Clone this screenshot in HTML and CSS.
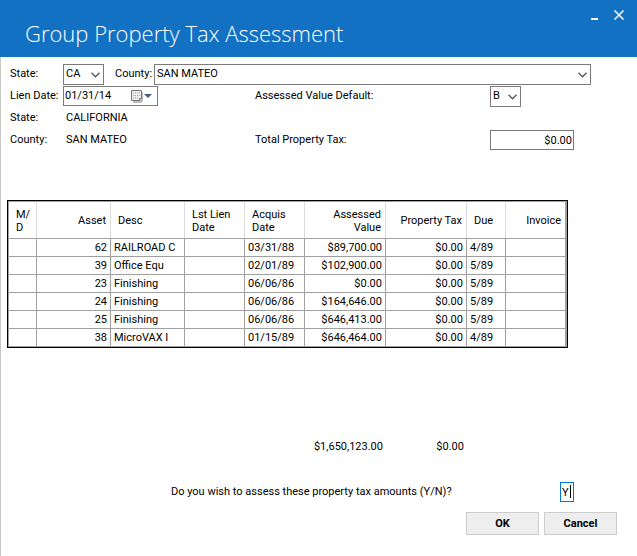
FILE: index.html
```html
<!DOCTYPE html>
<html lang="en">
<head>
<meta charset="utf-8">
<title>Group Property Tax Assessment</title>
<link rel="stylesheet" href="styles.css">
</head>
<body>
<header class="titlebar">
  <h1>Group Property Tax Assessment</h1>
  <div class="window-controls">
    <button type="button" aria-label="Minimize"><svg width="10" height="10" viewBox="0 0 10 10"><path d="M1 8h7v2H1z" fill="#fff"/></svg></button>
    <button type="button" aria-label="Close"><svg width="10" height="10" viewBox="0 0 10 10"><path d="M.5 .5l9 9M9.500 .5l-9 9" stroke="#fff" stroke-width="1.500" fill="none"/></svg></button>
  </div>
</header>
<main>
  <form>
    <div class="row">
      <label class="name" for="state">State:</label>
      <span class="select state"><select id="state"><option>CA</option></select><svg viewBox="0 0 9 6"><path d="M.5 .8l4 4 4-4"/></svg></span>
      <label class="county-name" for="county">County:</label>
      <span class="select county"><select id="county"><option>SAN MATEO</option></select><svg viewBox="0 0 9 6"><path d="M.5 .8l4 4 4-4"/></svg></span>
    </div>
    <div class="row">
      <label class="name" for="lien">Lien Date:</label>
      <span class="date"><input id="lien" type="text" value="01/31/14"><button type="button" aria-label="Choose date"><svg width="22" height="13" viewBox="0 0 22 13"><path d="M2 2h10v9l-2 2H2z" fill="#bbb"/><path d="M.5 .5h10v8l-2 2h-8z" fill="#eceef2" stroke="#777"/><path d="M2 3h7M2 5.500h7M2 8h6" stroke="#8ea0bd" stroke-dasharray="1 1"/><path d="M8.500 10.500v-2h2" fill="#fff" stroke="#777"/><path d="M13 4h8l-4 4z" fill="#3e5f7f"/></svg></button></span>
      <label class="mid" for="default">Assessed Value Default:</label>
      <span class="select default"><select id="default"><option>B</option></select><svg viewBox="0 0 9 6"><path d="M.5 .8l4 4 4-4"/></svg></span>
    </div>
    <div class="row"><span class="name">State:</span><span class="value">CALIFORNIA</span></div>
    <div class="row">
      <span class="name">County:</span><span class="value">SAN MATEO</span>
      <label class="mid" for="total">Total Property Tax:</label>
      <input class="total" id="total" type="text" value="$0.00">
    </div>
    <div class="grid">
      <table>
        <colgroup><col class="c-md"><col class="c-text"><col class="c-text"><col class="c-date"><col class="c-date"><col class="c-money"><col class="c-money"><col class="c-due"><col></colgroup>
        <thead><tr><th>M/<br>D</th><th class="num">Asset</th><th>Desc</th><th>Lst Lien<br>Date</th><th>Acquis<br>Date</th><th class="num">Assessed<br>Value</th><th class="num">Property Tax</th><th>Due</th><th class="num">Invoice</th></tr></thead>
        <tbody>
          <tr><td></td><td class="num">62</td><td>RAILROAD C</td><td></td><td>03/31/88</td><td class="num">$89,700.00</td><td class="num">$0.00</td><td>4/89</td><td></td></tr>
          <tr><td></td><td class="num">39</td><td>Office Equ</td><td></td><td>02/01/89</td><td class="num">$102,900.00</td><td class="num">$0.00</td><td>5/89</td><td></td></tr>
          <tr><td></td><td class="num">23</td><td>Finishing</td><td></td><td>06/06/86</td><td class="num">$0.00</td><td class="num">$0.00</td><td>5/89</td><td></td></tr>
          <tr><td></td><td class="num">24</td><td>Finishing</td><td></td><td>06/06/86</td><td class="num">$164,646.00</td><td class="num">$0.00</td><td>5/89</td><td></td></tr>
          <tr><td></td><td class="num">25</td><td>Finishing</td><td></td><td>06/06/86</td><td class="num">$646,413.00</td><td class="num">$0.00</td><td>5/89</td><td></td></tr>
          <tr><td></td><td class="num">38</td><td>MicroVAX I</td><td></td><td>01/15/89</td><td class="num">$646,464.00</td><td class="num">$0.00</td><td>4/89</td><td></td></tr>
        </tbody>
      </table>
    </div>
    <div class="sums"><output>$1,650,123.00</output><output>$0.00</output></div>
    <div class="confirm">
      <label for="answer">Do you wish to assess these property tax amounts (Y/N)?</label>
      <span class="answer"><input id="answer" type="text" value="Y"><i class="caret"></i></span>
    </div>
    <div class="actions"><button type="button">OK</button><button type="button">Cancel</button></div>
  </form>
</main>
</body>
</html>
```
FILE: styles.css
```css
* { box-sizing: border-box; }
body {
  margin: 0;
  min-height: 100vh;
  display: flex;
  flex-direction: column;
  background: #fff;
  color: #000;
  font: 11px/14px Roboto, "Liberation Sans", sans-serif;
}
input, select, button { font: inherit; color: inherit; border-radius: 0; margin: 0; }
.titlebar {
  display: flex;
  justify-content: space-between;
  height: 57px;
  padding: 10px 13px 0 25px;
  background: #1271c2;
  color: #fff;
}
h1 { margin: 8px 0 0; font: 300 22px/30px "Open Sans", sans-serif; }
.window-controls { display: flex; gap: 14px; height: 10px; }
.window-controls button { width: 10px; height: 10px; padding: 0; border: 0; background: none; }
.window-controls svg, .date svg { display: block; }
main { flex: 1; border-left: 1px solid #c8c8c8; padding-top: 6px; }
.row { display: flex; align-items: center; height: 22px; margin: 0 46px 0 9px; }
.name { width: 53px; white-space: nowrap; }
.value { width: 192px; padding-left: 3px; }
.select { position: relative; height: 21px; }
.select select {
  appearance: none;
  display: block;
  width: 100%;
  height: 21px;
  padding: 0 2px;
  border: 1px solid #7a7a7a;
  background: #fff;
}
.select svg {
  position: absolute;
  right: 4px;
  top: 8px;
  width: 9px;
  height: 6px;
  fill: none;
  stroke: #555;
  stroke-width: 1.3;
  pointer-events: none;
}
.state { width: 41px; }
.county-name { width: 39px; margin-left: 11px; }
.county { flex: 1; }
.default { width: 31px; }
.date { display: flex; align-items: center; width: 95px; height: 20px; margin-right: 97px; border: 1px solid #7a7a7a; }
.date input { flex: 1; min-width: 0; padding: 0 1px; border: 0; outline: 0; }
.date button { padding: 0; margin-right: 4px; border: 0; background: none; }
.mid { width: 235px; }
.total { width: 84px; height: 20px; padding: 0 1px; border: 1px solid #7a7a7a; text-align: right; }
.grid { margin: 49px 69px 0 6px; border: 1px solid #000; }
table {
  width: 100%;
  table-layout: fixed;
  border-spacing: 0;
  border: 1px solid #a0a0a0;
}
.c-md { width: 28px; }
.c-text { width: 74px; }
.c-date { width: 60px; }
.c-money { width: 81px; }
.c-due { width: 39px; }
th { height: 36px; padding: 1px 4px 0 7px; font-weight: normal; text-align: left; line-height: 13px; border-right: 1px solid #dcdcdc; }
td { height: 18px; padding: 0 3px; border-top: 1px solid #a0a0a0; border-right: 1px solid #a0a0a0; white-space: nowrap; overflow: hidden; }
.num { text-align: right; }
th:last-child, td:last-child { border-right-color: #a0a0a0; }
.sums { display: grid; grid-template-columns: 382px 81px; margin-top: 92px; text-align: right; }
.confirm { display: flex; align-items: center; margin: 28px 63px 0 170px; justify-content: space-between; }
.answer { position: relative; width: 14px; height: 20px; }
.answer input { display: block; width: 14px; height: 20px; padding: 0 1px; border: 1px solid #0078d7; outline: 0; }
.caret { position: absolute; right: 3px; top: 3px; width: 1px; height: 13px; background: #000; }
.actions { display: flex; justify-content: flex-end; gap: 5px; margin: 10px 20px 0 0; }
.actions button { width: 73px; height: 23px; padding: 0; border: 1px solid #ccc; background: #eee; font-weight: bold; }
```
